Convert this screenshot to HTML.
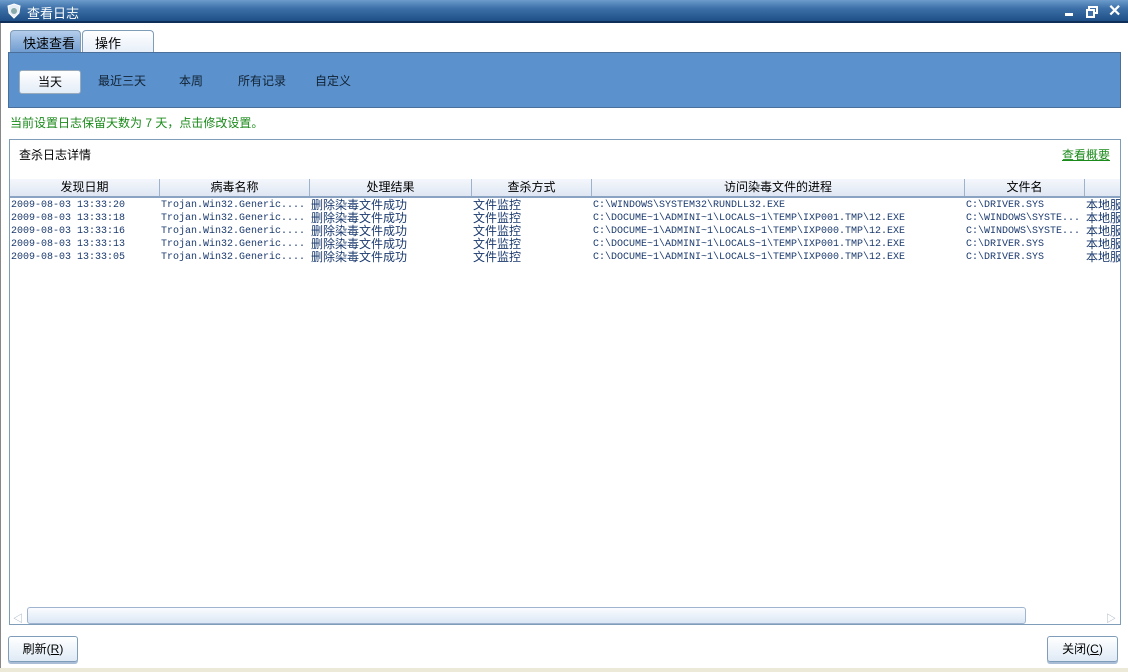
<!DOCTYPE html>
<html><head><meta charset="utf-8"><style>
*{margin:0;padding:0;box-sizing:border-box}
body{width:1128px;height:672px;overflow:hidden;background:#fff;font-family:"Liberation Sans","Noto Sans CJK SC",sans-serif;font-size:12px;position:relative;color:#000}
.abs{position:absolute}
.title{left:0;top:0;width:1128px;height:23px;background:linear-gradient(#6d9ccc 0,#3d70a8 40%,#1e4f86 100%);border-bottom:2px solid #0f2f58}
.title span{position:absolute;left:27px;top:3px;color:#fff;font-size:13px}
.tab{top:30px;height:23px;border:1px solid #7f9db9;border-bottom:none;border-radius:4px 4px 0 0;font-size:13px;padding:2px 0 0 12px}
.panel{left:8px;top:52px;width:1113px;height:56px;background:#5b91cc;border:1px solid #4a6f9a}
.pb{top:70px;height:24px;font-size:12px;color:#123;line-height:22px}
.grid{left:9px;top:139px;width:1112px;height:486px;border:1px solid #7f9db9;overflow:hidden}
.hd{top:179px;height:19px;background:linear-gradient(#f4f7fc,#dfe7f3);border-bottom:2px solid #8aa3c3}
.hc{position:absolute;top:0;height:17px;border-right:1px solid #9fb2cc;text-align:center;font-size:12px;line-height:17px}
.row{position:absolute;height:13px;font-size:11px;line-height:13px;color:#1b3a6e;white-space:nowrap}
.m{font-family:"Liberation Mono",monospace;font-size:10px;position:absolute}
.c{font-size:12px;position:absolute}
.btn{top:636px;height:26px;border:1px solid #7f9db9;border-radius:3px;background:linear-gradient(#fff,#dfeaf6);box-shadow:0 2px 0 #a9bdd6;font-size:12px;text-align:center;line-height:24px}
</style></head><body>
<div class="abs title"><svg class="abs" style="left:6px;top:3px" width="16" height="16"><path d="M8 1 L14 3 L13 10 L8 15 L3 10 L2 3Z" fill="#e8eef6" stroke="#fff"/><circle cx="8" cy="8" r="3" fill="#8aa"/></svg><span>查看日志</span>
<div class="abs" style="left:1065px;top:13px;width:8px;height:3px;background:#fff"></div>
<svg class="abs" style="left:1086px;top:6px" width="12" height="12"><rect x="3" y="1" width="8" height="6" fill="none" stroke="#fff" stroke-width="2"/><rect x="1" y="4" width="7" height="7" fill="#3d70a8" stroke="#fff" stroke-width="2"/></svg>
<div class="abs" style="left:1108px;top:1px;color:#fff;font-size:16px;font-weight:bold">✕</div></div>
<div class="abs" style="left:0;top:23px;width:1px;height:649px;background:#888"></div>
<div class="abs" style="left:0;top:668px;width:1128px;height:4px;background:#ece9d8"></div>
<div class="abs tab" style="left:10px;width:71px;background:linear-gradient(#b4cdeb,#6d9ad0)">快速查看</div>
<div class="abs tab" style="left:82px;width:72px;background:linear-gradient(#fff,#e6eef8)">操作</div>
<div class="abs panel"></div>
<div class="abs pb" style="left:19px;width:62px;background:linear-gradient(#fff,#e3ecf7);border:1px solid #9ab;border-radius:3px;text-align:center;color:#000">当天</div>
<div class="abs pb" style="left:98px">最近三天</div>
<div class="abs pb" style="left:179px">本周</div>
<div class="abs pb" style="left:238px">所有记录</div>
<div class="abs pb" style="left:315px">自定义</div>
<div class="abs" style="left:10px;top:114px;color:#1a8a1a;font-size:12px">当前设置日志保留天数为 7 天，点击修改设置。</div>
<div class="abs grid"></div>
<div class="abs" style="left:19px;top:146px;font-size:12px">查杀日志详情</div>
<div class="abs" style="left:1062px;top:146px;font-size:12px;color:#1a8a1a;text-decoration:underline">查看概要</div>
<div class="abs hd" style="left:10px;width:1110px">
<div class="hc" style="left:0;width:150px">发现日期</div>
<div class="hc" style="left:150px;width:150px">病毒名称</div>
<div class="hc" style="left:300px;width:162px">处理结果</div>
<div class="hc" style="left:462px;width:120px">查杀方式</div>
<div class="hc" style="left:582px;width:373px">访问染毒文件的进程</div>
<div class="hc" style="left:955px;width:120px">文件名</div>
</div>
<div id="rows"></div>
<script>
var d=["20","18","16","13","05"],p=["C:\\WINDOWS\\SYSTEM32\\RUNDLL32.EXE","C:\\DOCUME~1\\ADMINI~1\\LOCALS~1\\TEMP\\IXP001.TMP\\12.EXE","C:\\DOCUME~1\\ADMINI~1\\LOCALS~1\\TEMP\\IXP000.TMP\\12.EXE","C:\\DOCUME~1\\ADMINI~1\\LOCALS~1\\TEMP\\IXP001.TMP\\12.EXE","C:\\DOCUME~1\\ADMINI~1\\LOCALS~1\\TEMP\\IXP000.TMP\\12.EXE"],f=["C:\\DRIVER.SYS","C:\\WINDOWS\\SYSTE...","C:\\WINDOWS\\SYSTE...","C:\\DRIVER.SYS","C:\\DRIVER.SYS"],h="";
for(var i=0;i<5;i++){var t=199+i*13;h+='<div class="row" style="left:0;top:'+t+'px;width:1120px"><span class="m" style="left:11px">2009-08-03 13:33:'+d[i]+'</span><span class="m" style="left:161px">Trojan.Win32.Generic....</span><span class="c" style="left:311px">删除染毒文件成功</span><span class="c" style="left:473px">文件监控</span><span class="m" style="left:593px">'+p[i]+'</span><span class="m" style="left:966px">'+f[i]+'</span><span class="c" style="left:1086px;width:34px;overflow:hidden">本地服</span></div>';}
document.getElementById('rows').innerHTML=h;
</script>
<div class="abs" style="left:13px;top:610px;color:#9ab;font-size:10px">◁</div>
<div class="abs" style="left:1106px;top:610px;color:#9ab;font-size:10px">▷</div>
<div class="abs" style="left:27px;top:607px;width:999px;height:17px;border:1px solid #9fb5cf;border-radius:3px;background:linear-gradient(#fafcff,#dbe7f5)"></div>
<div class="abs btn" style="left:8px;width:70px">刷新(<u>R</u>)</div>
<div class="abs btn" style="left:1047px;width:71px">关闭(<u>C</u>)</div>
</body></html>
